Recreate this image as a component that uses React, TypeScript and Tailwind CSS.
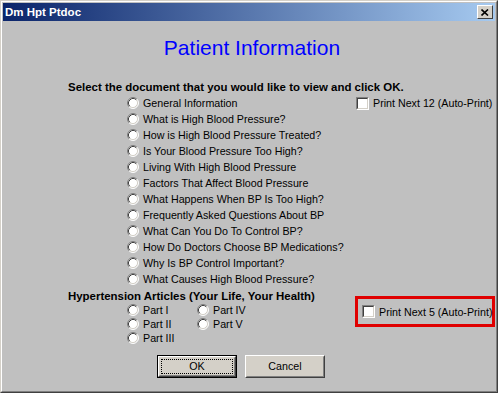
import React from "react";

const Radio = () => (
  <svg width="12" height="12" viewBox="0 0 12 12" className="shrink-0">
    <circle cx="6" cy="6" r="5" fill="#fff" />
    <path d="M9.89 2.11 A5.5 5.5 0 0 0 2.11 9.89" stroke="#808080" fill="none" />
    <path d="M2.11 9.89 A5.5 5.5 0 0 0 9.89 2.11" stroke="#ffffff" fill="none" />
    <path d="M9.18 2.82 A4.5 4.5 0 0 0 2.82 9.18" stroke="#404040" fill="none" />
    <path d="M2.82 9.18 A4.5 4.5 0 0 0 9.18 2.82" stroke="#d4d0c8" fill="none" />
  </svg>
);

const Check = () => (
  <div className="w-[13px] h-[13px] shrink-0 border border-t-[#808080] border-l-[#808080] border-r-white border-b-white">
    <div className="w-full h-full bg-white border border-t-[#404040] border-l-[#404040] border-r-[#d4d0c8] border-b-[#d4d0c8]" />
  </div>
);

const docs = [
  "General Information",
  "What is High Blood Pressure?",
  "How is High Blood Pressure Treated?",
  "Is Your Blood Pressure Too High?",
  "Living With High Blood Pressure",
  "Factors That Affect Blood Pressure",
  "What Happens When BP Is Too High?",
  "Frequently Asked Questions About BP",
  "What Can You Do To Control BP?",
  "How Do Doctors Choose BP Medications?",
  "Why Is BP Control Important?",
  "What Causes High Blood Pressure?",
];

export default function App() {
  return (
    <div className="w-[498px] h-[393px] bg-[#c0c0c0] border border-t-[#d4d0c8] border-l-[#d4d0c8] border-r-[#404040] border-b-[#404040] font-['Liberation_Sans',Arial,sans-serif] text-black">
      <div className="w-full h-full border border-t-white border-l-white border-r-[#808080] border-b-[#808080] p-[1px] flex flex-col">
        {/* Title bar */}
        <div className="h-[18px] shrink-0 flex items-center justify-between pl-[2px] pr-[2px] bg-[linear-gradient(to_right,#0a246a,#a6caf0)]">
          <span className="text-white font-bold text-[11.5px] leading-[14px]">Dm Hpt Ptdoc</span>
          <div className="w-[16px] h-[14px] bg-[#d4d0c8] border border-t-white border-l-white border-r-[#404040] border-b-[#404040] flex items-center justify-center">
            <svg width="8" height="7" viewBox="0 0 8 7">
              <path d="M0.5 0.5 L7 6.5 M7 0.5 L0.5 6.5" stroke="#000" strokeWidth="1.6" />
            </svg>
          </div>
        </div>

        {/* Heading */}
        <div className="mt-[15px] pl-[6px] text-center text-[21px] leading-[24px] text-[#0000ff]">
          Patient Information
        </div>

        <div className="mt-[21px] pl-[65px] font-bold text-[11.45px] leading-[13px] whitespace-nowrap">
          Select the document that you would like to view and click OK.
        </div>

        <div className="mt-[1px] flex">
          <div className="ml-[124px] w-[229px] flex flex-col">
            {docs.map((d) => (
              <div key={d} className="h-[16px] flex items-center gap-[4px]">
                <Radio />
                <span className="text-[10.7px] leading-[13px] whitespace-nowrap pt-[1px]">{d}</span>
              </div>
            ))}
          </div>
          <div className="h-[16px] flex items-center gap-[4px]">
            <Check />
            <span className="text-[10.7px] leading-[13px] whitespace-nowrap pt-[1px]">Print Next 12 (Auto-Print)</span>
          </div>
        </div>

        <div className="mt-[3px] flex">
          <div className="w-[352px] flex flex-col">
            <div className="pl-[65px] font-bold text-[11.45px] leading-[13px] whitespace-nowrap">
              Hypertension Articles (Your Life, Your Health)
            </div>
            <div className="ml-[124px] grid grid-cols-[70px_70px]">
              {[
                ["Part I", "Part IV"],
                ["Part II", "Part V"],
                ["Part III", ""],
              ].map((row, i) =>
                row.map((p, j) =>
                  p ? (
                    <div key={`${i}-${j}`} className="h-[14px] flex items-center gap-[4px]">
                      <Radio />
                      <span className="text-[10.7px] leading-[13px] whitespace-nowrap pt-[1px]">{p}</span>
                    </div>
                  ) : (
                    <div key={`${i}-${j}`} />
                  )
                )
              )}
            </div>
          </div>
          <div className="mt-[6px] w-[140px] h-[31px] border-[3px] border-[#e00000] flex items-center gap-[4px] pl-[4px]">
            <Check />
            <span className="text-[10.7px] leading-[13px] whitespace-nowrap pt-[1px]">Print Next 5 (Auto-Print)</span>
          </div>
        </div>

        <div className="mt-[10px] ml-[154px] flex gap-[8px]">
          <div className="w-[80px] h-[23px] border border-black">
            <div className="w-full h-full bg-[#d4d0c8] border border-t-white border-l-white border-r-[#404040] border-b-[#404040]">
              <div className="w-full h-full border border-t-[#d4d0c8] border-l-[#d4d0c8] border-r-[#808080] border-b-[#808080] p-[1px]">
                <div className="w-full h-full border border-dotted border-black flex items-center justify-center text-[10.7px] leading-[13px]">
                  OK
                </div>
              </div>
            </div>
          </div>
          <div className="w-[80px] h-[23px] bg-[#d4d0c8] border border-t-white border-l-white border-r-[#404040] border-b-[#404040]">
            <div className="w-full h-full border border-t-[#d4d0c8] border-l-[#d4d0c8] border-r-[#808080] border-b-[#808080] flex items-center justify-center text-[10.7px] leading-[13px]">
              Cancel
            </div>
          </div>
        </div>
      </div>
    </div>
  );
}
